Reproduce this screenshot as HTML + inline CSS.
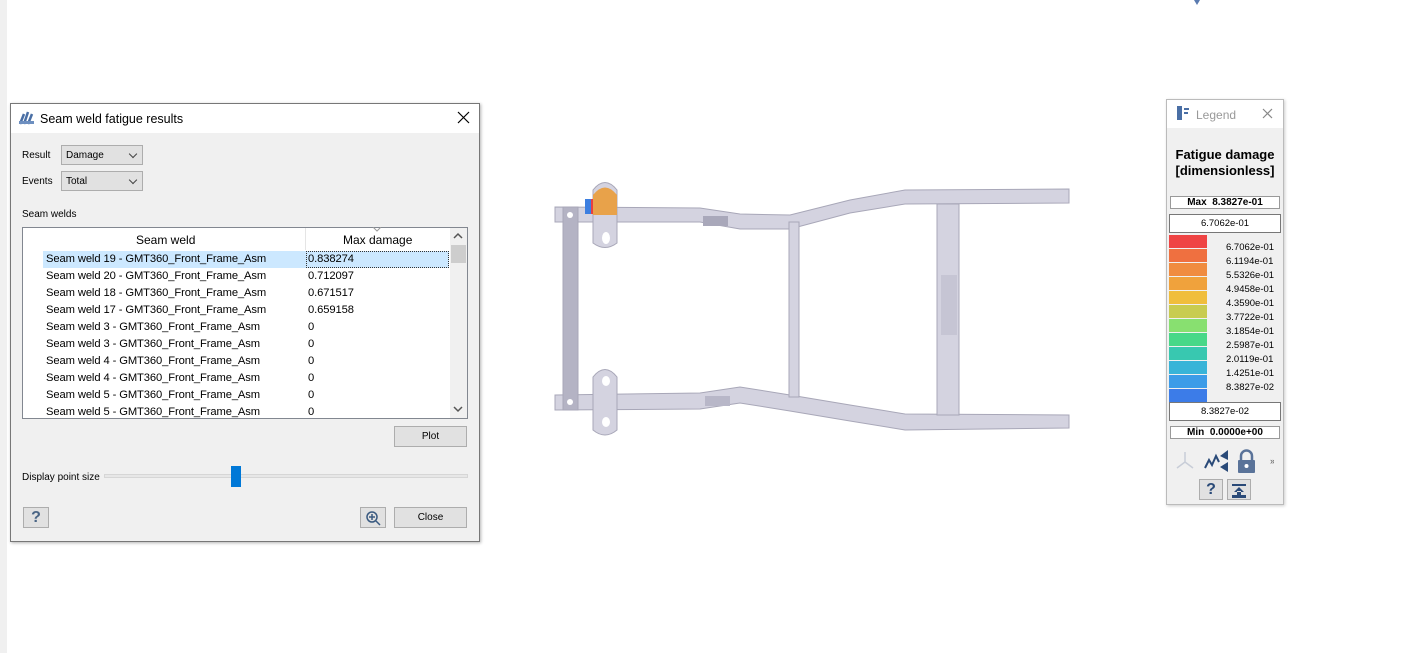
<!DOCTYPE html>
<html><head><style>
*{margin:0;padding:0;box-sizing:border-box}
body{width:1412px;height:653px;background:#fff;position:relative;overflow:hidden;font-family:"Liberation Sans",sans-serif;font-size:11px;color:#000}
.a{position:absolute}
.btn{position:absolute;background:#e1e1e1;border:1px solid #adadad;text-align:center;font-size:10px;line-height:19px}
.combo{position:absolute;background:#e1e1e1;border:1px solid #adadad;font-size:10px;line-height:19px;padding-left:4px}
.combo:after{content:"";position:absolute;right:6px;top:5px;width:5px;height:5px;border-right:1px solid #444;border-bottom:1px solid #444;transform:rotate(45deg)}
.row{position:absolute;left:46px;height:17px;line-height:17px;font-size:11.2px;white-space:nowrap;letter-spacing:-0.1px}
.sw{position:absolute;left:1169px;width:38px;height:13px}
.lv{position:absolute;left:1226px;font-size:9.5px;line-height:14px}
</style></head><body>
<div class="a" style="left:0;top:0;width:7px;height:653px;background:#f0f0f0"></div>
<svg class="a" style="left:1193px;top:0" width="8" height="6"><path d="M1 0L4 5L7 0" fill="#5a7bb0"/></svg>

<div class="a" style="left:10px;top:103px;width:470px;height:439px;background:#f0f0f0;border:1px solid #777;box-shadow:1px 1px 3px rgba(0,0,0,.3)"></div>
<div class="a" style="left:11px;top:104px;width:468px;height:29px;background:#fff"></div>
<svg class="a" style="left:18px;top:110px" width="18" height="16"><path d="M2 14L6 4M6 14L10 2M10 14L14 4" stroke="#4a6fa5" stroke-width="2.5"/><rect x="1" y="11" width="15" height="3" fill="#6d8fc0"/></svg>
<div class="a" style="left:40px;top:112px;font-size:12.5px">Seam weld fatigue results</div>
<svg class="a" style="left:457px;top:111px" width="13" height="13"><path d="M1 1L12 12M12 1L1 12" stroke="#000" stroke-width="1.2"/></svg>
<div class="a" style="left:22px;top:150px;font-size:10px">Result</div>
<div class="combo" style="left:61px;top:145px;width:82px;height:20px">Damage</div>
<div class="a" style="left:22px;top:176px;font-size:10px">Events</div>
<div class="combo" style="left:61px;top:171px;width:82px;height:20px">Total</div>
<div class="a" style="left:22px;top:209px;font-size:10px">Seam welds</div>
<div class="a" style="left:22px;top:227px;width:446px;height:192px;background:#fff;border:1px solid #828790"></div>
<div class="a" style="left:305px;top:228px;width:1px;height:22px;background:#e5e5e5"></div>
<div class="a" style="left:136px;top:233px;font-size:12px">Seam weld</div>
<div class="a" style="left:343px;top:233px;font-size:12px">Max damage</div>
<svg class="a" style="left:373px;top:227px" width="8" height="5"><path d="M0 0L4 4L8 0" stroke="#999" fill="none"/></svg>
<div class="a" style="left:450px;top:228px;width:17px;height:190px;background:#f0f0f0"></div>
<div class="a" style="left:451px;top:245px;width:15px;height:18px;background:#cdcdcd"></div>
<svg class="a" style="left:453px;top:232px" width="10" height="8"><path d="M1 6L5 2L9 6" stroke="#555" stroke-width="1.5" fill="none"/></svg>
<svg class="a" style="left:453px;top:405px" width="10" height="8"><path d="M1 2L5 6L9 2" stroke="#555" stroke-width="1.5" fill="none"/></svg>
<div class="a" style="left:43px;top:251px;width:406px;height:17px;background:#cce8ff"></div>
<div class="a" style="left:306px;top:251px;width:143px;height:17px;border:1px dotted #333"></div>
<div class="row" style="top:251px">Seam weld 19 - GMT360_Front_Frame_Asm</div><div class="row" style="top:251px;left:308px">0.838274</div>
<div class="row" style="top:268px">Seam weld 20 - GMT360_Front_Frame_Asm</div><div class="row" style="top:268px;left:308px">0.712097</div>
<div class="row" style="top:285px">Seam weld 18 - GMT360_Front_Frame_Asm</div><div class="row" style="top:285px;left:308px">0.671517</div>
<div class="row" style="top:302px">Seam weld 17 - GMT360_Front_Frame_Asm</div><div class="row" style="top:302px;left:308px">0.659158</div>
<div class="row" style="top:319px">Seam weld 3 - GMT360_Front_Frame_Asm</div><div class="row" style="top:319px;left:308px">0</div>
<div class="row" style="top:336px">Seam weld 3 - GMT360_Front_Frame_Asm</div><div class="row" style="top:336px;left:308px">0</div>
<div class="row" style="top:353px">Seam weld 4 - GMT360_Front_Frame_Asm</div><div class="row" style="top:353px;left:308px">0</div>
<div class="row" style="top:370px">Seam weld 4 - GMT360_Front_Frame_Asm</div><div class="row" style="top:370px;left:308px">0</div>
<div class="row" style="top:387px">Seam weld 5 - GMT360_Front_Frame_Asm</div><div class="row" style="top:387px;left:308px">0</div>
<div class="a" style="left:23px;top:404px;width:426px;height:14px;overflow:hidden"><div class="row" style="top:0;left:23px">Seam weld 5 - GMT360_Front_Frame_Asm</div><div class="row" style="top:0;left:285px">0</div></div>
<div class="btn" style="left:394px;top:426px;width:73px;height:21px">Plot</div>
<div class="a" style="left:22px;top:472px;font-size:10px">Display point size</div>
<div class="a" style="left:104px;top:474px;width:364px;height:4px;background:#e7e7e7;border:1px solid #d6d6d6"></div>
<div class="a" style="left:231px;top:466px;width:10px;height:21px;background:#0078d7"></div>
<div class="btn" style="left:23px;top:507px;width:26px;height:21px;font-size:16px;font-weight:bold;color:#4a6585;line-height:19px">?</div>
<div class="btn" style="left:360px;top:507px;width:26px;height:21px"><svg width="16" height="16" style="margin-top:2px"><circle cx="7" cy="7" r="5" stroke="#3a5a80" stroke-width="1.5" fill="none"/><path d="M7 4V10M4 7H10M11 11L15 15" stroke="#3a5a80" stroke-width="1.5"/></svg></div>
<div class="btn" style="left:394px;top:507px;width:73px;height:21px">Close</div>

<svg class="a" style="left:550px;top:175px" width="530" height="265" viewBox="550 175 530 265">
<g fill="#d4d3e0" stroke="#a8a7b8" stroke-width="1">
<path d="M555 207L700 208L740 214L790 215L850 200L905 190L1069 189L1069 203L905 204L850 213L790 229L740 229L700 222L555 222Z"/>
<path d="M555 395L700 393L740 387L790 395L850 405L905 414L1069 415L1069 428L905 430L850 421L790 411L740 403L700 409L555 410Z"/>
<rect x="563" y="207" width="15" height="203" fill="#b4b3c4"/>
<rect x="789" y="222" width="10" height="175"/>
<path d="M937 204H959V415H937Z"/>
<path d="M593 190Q605 175 617 190V243Q605 252 593 243Z"/>
<path d="M593 377Q605 362 617 377V430Q605 440 593 430Z"/>
</g>
<rect x="703" y="216" width="25" height="10" fill="#a9a8ba"/>
<rect x="705" y="396" width="25" height="10" fill="#b8b7c8"/>
<rect x="941" y="275" width="16" height="60" fill="#c6c5d4"/>
<path d="M593 195Q605 180 617 195V215H593Z" fill="#e8a24a"/>
<rect x="585" y="199" width="7" height="15" fill="#3d7fe0"/>
<rect x="591" y="199" width="2" height="15" fill="#e94040"/>
<g fill="#fff"><circle cx="570" cy="215" r="3"/><circle cx="570" cy="402" r="3"/><ellipse cx="606" cy="238" rx="4" ry="6"/><ellipse cx="606" cy="381" rx="4" ry="5"/><ellipse cx="606" cy="422" rx="4" ry="5"/></g>
</svg>

<div class="a" style="left:1166px;top:99px;width:118px;height:406px;background:#f0f0f0;border:1px solid #bbb;box-shadow:1px 1px 3px rgba(0,0,0,.2)"></div>
<div class="a" style="left:1167px;top:100px;width:116px;height:28px;background:#fff"></div>
<svg class="a" style="left:1175px;top:105px" width="16" height="16"><rect x="2" y="1" width="5" height="14" fill="#4a6fa5"/><path d="M9 4H14M9 8H13" stroke="#4a6fa5" stroke-width="2"/></svg>
<div class="a" style="left:1196px;top:108px;font-size:12px;color:#999">Legend</div>
<svg class="a" style="left:1262px;top:108px" width="11" height="11"><path d="M1 1L10 10M10 1L1 10" stroke="#888" stroke-width="1.2"/></svg>
<div class="a" style="left:1166px;top:147px;width:118px;text-align:center;font-size:13px;font-weight:bold;line-height:16px">Fatigue damage<br>[dimensionless]</div>
<div class="a" style="left:1170px;top:196px;width:110px;height:13px;background:#fff;border:1px solid #999;font-size:10px;font-weight:bold;text-align:center;line-height:12px">Max &nbsp;8.3827e-01</div>
<div class="a" style="left:1169px;top:214px;width:112px;height:19px;background:#fff;border:1px solid #777;font-size:9.5px;text-align:center;line-height:17px">6.7062e-01</div>
<div class="sw" style="top:235px;background:#ef4444"></div>
<div class="sw" style="top:249px;background:#ef7040"></div>
<div class="sw" style="top:263px;background:#f08c40"></div>
<div class="sw" style="top:277px;background:#f0a23c"></div>
<div class="sw" style="top:291px;background:#f0be3c"></div>
<div class="sw" style="top:305px;background:#c8cc50"></div>
<div class="sw" style="top:319px;background:#88e070"></div>
<div class="sw" style="top:333px;background:#48d888"></div>
<div class="sw" style="top:347px;background:#38c8b0"></div>
<div class="sw" style="top:361px;background:#38b4d8"></div>
<div class="sw" style="top:375px;background:#3c9ce8"></div>
<div class="sw" style="top:389px;background:#3c7ce8"></div>
<div class="lv" style="top:241px">6.7062e-01</div>
<div class="lv" style="top:255px">6.1194e-01</div>
<div class="lv" style="top:269px">5.5326e-01</div>
<div class="lv" style="top:283px">4.9458e-01</div>
<div class="lv" style="top:297px">4.3590e-01</div>
<div class="lv" style="top:311px">3.7722e-01</div>
<div class="lv" style="top:325px">3.1854e-01</div>
<div class="lv" style="top:339px">2.5987e-01</div>
<div class="lv" style="top:353px">2.0119e-01</div>
<div class="lv" style="top:367px">1.4251e-01</div>
<div class="lv" style="top:381px">8.3827e-02</div>
<div class="a" style="left:1169px;top:402px;width:112px;height:19px;background:#fff;border:1px solid #777;font-size:9.5px;text-align:center;line-height:17px">8.3827e-02</div>
<div class="a" style="left:1170px;top:426px;width:110px;height:13px;background:#fff;border:1px solid #999;font-size:10px;font-weight:bold;text-align:center;line-height:12px">Min &nbsp;0.0000e+00</div>
<svg class="a" style="left:1174px;top:448px" width="100" height="26">
<path d="M11 4V14L3 20M11 14L19 20" stroke="#c8cdd8" stroke-width="1.5" fill="none"/>
<path d="M31 20L35 12L38 17L42 8L45 14" stroke="#2a4a78" stroke-width="2" fill="none"/>
<path d="M54 2L46 8L54 12ZM54 14L46 19L54 24Z" fill="#2a4a78"/>
<rect x="64" y="12" width="17" height="13" rx="1" fill="#5a7399"/><path d="M67 12V8A5.5 5.5 0 0 1 78 8V12" stroke="#5a7399" stroke-width="2.5" fill="none"/><circle cx="72.5" cy="18" r="2" fill="#fff"/>
<text x="96" y="16" font-size="9" fill="#555">»</text>
</svg>
<div class="btn" style="left:1199px;top:479px;width:24px;height:21px;font-size:16px;font-weight:bold;color:#2a4a78">?</div>
<div class="btn" style="left:1227px;top:479px;width:24px;height:21px"><svg width="18" height="17" style="margin-top:2px"><path d="M2 3H16" stroke="#2a4a78" stroke-width="2"/><path d="M9 5L4 10H14Z M7 9H11V13H7Z" fill="#2a4a78"/><rect x="2" y="13" width="14" height="3" fill="#2a4a78"/></svg></div>
</body></html>
